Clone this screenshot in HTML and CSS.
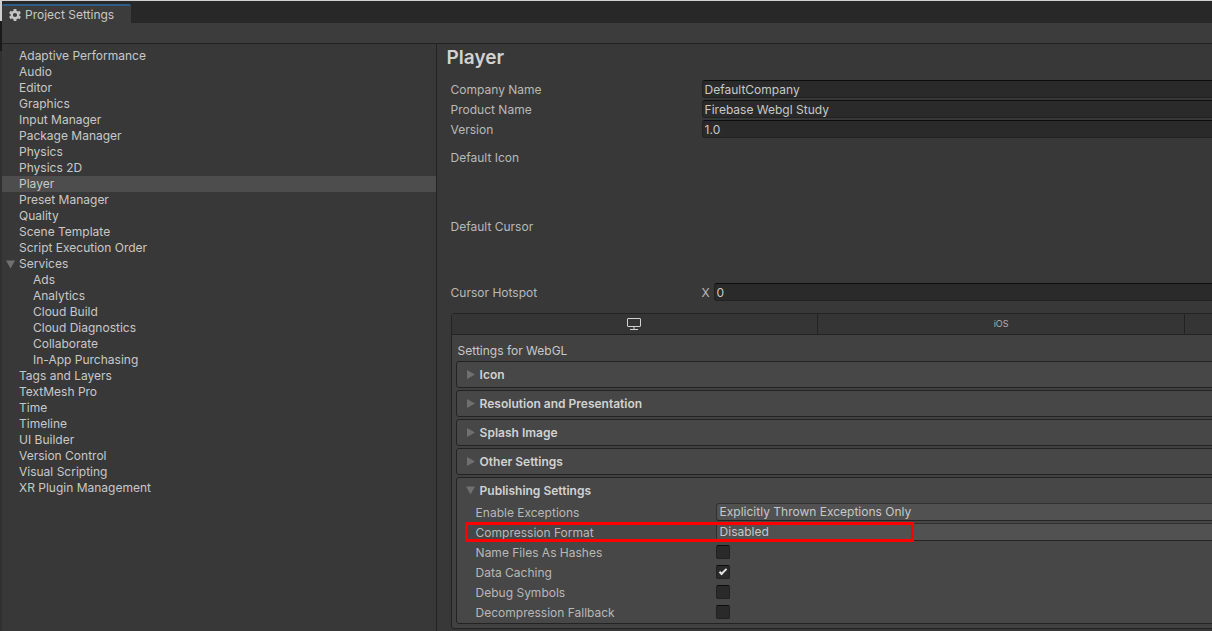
FILE: index.html
```html
<!DOCTYPE html>
<html lang="en">

<head>
    <meta charset="UTF-8">
    <meta name="viewport" content="width=device-width, initial-scale=1.0">
    <title>Project Settings</title>
    <link rel="stylesheet" href="styles.css">
</head>

<body>
    <div class="edge"></div>
    <div class="window">
        <div class="tabBar">
            <button type="button" class="windowTab">
                <svg class="gear" viewBox="-6 -6 12 12">
                    <circle r="3.300" stroke-width="2.400"/>
                    <path stroke-width="2.800" d="M0-6v2M0 4v2M5.200-3l-1.700 1M-5.200-3l1.700 1M5.200 3l-1.700-1M-5.200 3l1.700-1"/>
                </svg>
                Project Settings
            </button>
        </div>
        <div class="toolbar"></div>

        <div class="panes">
            <nav class="sidebar">
                <a href="#">Adaptive Performance</a>
                <a href="#">Audio</a>
                <a href="#">Editor</a>
                <a href="#">Graphics</a>
                <a href="#">Input Manager</a>
                <a href="#">Package Manager</a>
                <a href="#">Physics</a>
                <a href="#">Physics 2D</a>
                <a href="#" class="selected">Player</a>
                <a href="#">Preset Manager</a>
                <a href="#">Quality</a>
                <a href="#">Scene Template</a>
                <a href="#">Script Execution Order</a>
                <a href="#" class="parent"><svg class="arrow" viewBox="0 0 9 8"><path d="M0 0h9L4.500 8z"/></svg>Services</a>
                <a href="#" class="child">Ads</a>
                <a href="#" class="child">Analytics</a>
                <a href="#" class="child">Cloud Build</a>
                <a href="#" class="child">Cloud Diagnostics</a>
                <a href="#" class="child">Collaborate</a>
                <a href="#" class="child">In-App Purchasing</a>
                <a href="#">Tags and Layers</a>
                <a href="#">TextMesh Pro</a>
                <a href="#">Time</a>
                <a href="#">Timeline</a>
                <a href="#">UI Builder</a>
                <a href="#">Version Control</a>
                <a href="#">Visual Scripting</a>
                <a href="#">XR Plugin Management</a>
            </nav>

            <main class="content">
                <h1>Player</h1>
                <form class="playerForm">
                    <div class="row">
                        <label for="companyName">Company Name</label>
                        <input type="text" id="companyName" value="DefaultCompany">
                    </div>
                    <div class="row">
                        <label for="productName">Product Name</label>
                        <input type="text" id="productName" value="Firebase Webgl Study">
                    </div>
                    <div class="row">
                        <label for="version">Version</label>
                        <input type="text" id="version" value="1.0">
                    </div>
                    <div class="pickerRow">Default Icon</div>
                    <div class="pickerRow">Default Cursor</div>
                    <div class="row hotspot">
                        <span class="name">Cursor Hotspot</span>
                        <label for="hotspotX" class="axis">X</label>
                        <input type="text" id="hotspotX" value="0">
                    </div>

                    <div class="platforms">
                        <div class="platformTabs">
                            <button type="button" aria-label="WebGL">
                                <svg class="monitor" viewBox="0 0 14 12">
                                    <rect x="0.500" y="0.500" width="13" height="8" rx="0.500"/>
                                    <path d="M7 9v2M3 11.500h8"/>
                                </svg>
                            </button>
                            <button type="button">iOS</button>
                            <button type="button" aria-label="Android"></button>
                        </div>
                        <div class="platformBody">
                            <p>Settings for WebGL</p>
                            <section>
                                <h2><svg class="arrow" viewBox="0 0 9 9"><path d="M1 0v9l8-4.500z"/></svg>Icon</h2>
                            </section>
                            <section>
                                <h2><svg class="arrow" viewBox="0 0 9 9"><path d="M1 0v9l8-4.500z"/></svg>Resolution and Presentation</h2>
                            </section>
                            <section>
                                <h2><svg class="arrow" viewBox="0 0 9 9"><path d="M1 0v9l8-4.500z"/></svg>Splash Image</h2>
                            </section>
                            <section>
                                <h2><svg class="arrow" viewBox="0 0 9 9"><path d="M1 0v9l8-4.500z"/></svg>Other Settings</h2>
                            </section>
                            <section>
                                <h2><svg class="arrow" viewBox="0 0 9 8"><path d="M0 0h9L4.500 8z"/></svg>Publishing Settings</h2>
                                <div class="options">
                                    <div class="row">
                                        <label for="exceptions">Enable Exceptions</label>
                                        <select id="exceptions">
                                            <option>None</option>
                                            <option selected>Explicitly Thrown Exceptions Only</option>
                                            <option>Full Without Stacktrace</option>
                                            <option>Full With Stacktrace</option>
                                        </select>
                                    </div>
                                    <div class="row">
                                        <label for="compression">Compression Format</label>
                                        <select id="compression">
                                            <option>Brotli</option>
                                            <option>Gzip</option>
                                            <option selected>Disabled</option>
                                        </select>
                                        <div class="highlight"></div>
                                    </div>
                                    <div class="row">
                                        <label for="hashes">Name Files As Hashes</label>
                                        <input type="checkbox" id="hashes">
                                    </div>
                                    <div class="row">
                                        <label for="caching">Data Caching</label>
                                        <input type="checkbox" id="caching" checked>
                                    </div>
                                    <div class="row">
                                        <label for="symbols">Debug Symbols</label>
                                        <input type="checkbox" id="symbols">
                                    </div>
                                    <div class="row">
                                        <label for="fallback">Decompression Fallback</label>
                                        <input type="checkbox" id="fallback">
                                    </div>
                                </div>
                            </section>
                        </div>
                    </div>
                </form>
            </main>
        </div>
    </div>
</body>

</html>
```
FILE: styles.css
```css
* {
    box-sizing: border-box;
}

body {
    margin: 0;
    display: flex;
    min-height: 100vh;
    border-top: 1px solid #d0d0d0;
    background-color: #383838;
    color: #c8c8c8;
    font-family: Inter, "Liberation Sans", sans-serif;
    font-size: 12px;
    line-height: 16px;
    overflow: hidden;
}

button,
input,
select {
    margin: 0;
    font: inherit;
    color: inherit;
}

/* sliver of the window behind */
.edge {
    flex: none;
    width: 2px;
    background: linear-gradient(#d0d0d0 20px, #1a1a1a 20px, #1a1a1a 50px, #303030 50px);
}

.window {
    flex: 1;
    min-width: 0;
    display: flex;
    flex-direction: column;
}

.tabBar {
    display: flex;
    height: 22px;
    padding-top: 3px;
    background-color: #282828;
}

.windowTab {
    display: flex;
    align-items: center;
    gap: 4px;
    padding: 0 17px 0 7px;
    border: none;
    border-top: 2px solid #2c5d87;
    border-radius: 2px 2px 0 0;
    background-color: #3c3c3c;
}

.gear {
    width: 12px;
    height: 12px;
    fill: none;
    stroke: #c4c4c4;
}

.toolbar {
    height: 21px;
    border-bottom: 1px solid #232323;
    background-color: #3c3c3c;
}

.panes {
    flex: 1;
    display: flex;
}

.sidebar {
    flex: none;
    display: flex;
    flex-direction: column;
    width: calc(36% - 1px);
    padding-top: 4px;
    border-right: 1px solid #232323;
}

.sidebar a {
    padding-left: 17px;
    color: inherit;
    text-decoration: none;
}

.sidebar .selected {
    background-color: #4d4d4d;
}

.sidebar .child {
    padding-left: 31px;
}

.sidebar .parent {
    display: flex;
    align-items: center;
    gap: 4px;
    padding-left: 4px;
}

.arrow {
    width: 9px;
    height: 9px;
    fill: #707070;
}

.content {
    flex: 1;
    min-width: 0;
    padding: 0 0 2px 10px;
    overflow: hidden;
}

h1 {
    margin: 0 0 8px;
    font-size: 19px;
    line-height: 28px;
    font-weight: 600;
    color: #d2d2d2;
}

.playerForm {
    min-width: 1106px;
    padding-left: 4px;
}

.row {
    display: flex;
    align-items: center;
    height: 18px;
    margin-bottom: 2px;
}

.row label,
.name {
    flex: none;
    width: 251px;
    padding-top: 2px;
    color: #b8b8b8;
}

.row .axis {
    width: 12px;
}

input[type="text"] {
    flex: 1;
    height: 18px;
    padding: 0 2px;
    border: 1px solid #212121;
    border-top-color: #0d0d0d;
    border-radius: 3px;
    background-color: #2a2a2a;
}

.pickerRow {
    height: 69px;
    padding-top: 10px;
    color: #b8b8b8;
}

.hotspot {
    margin-top: 5px;
}

.platforms {
    margin-top: 12px;
    border: 1px solid #232323;
    border-radius: 3px;
    background-color: #414141;
}

.platformTabs {
    display: grid;
    grid-template-columns: repeat(3, 1fr);
    height: 21px;
    border-bottom: 1px solid #232323;
    background-color: #353535;
}

.platformTabs button {
    display: flex;
    align-items: center;
    justify-content: center;
    padding: 0;
    border: none;
    border-right: 1px solid #232323;
    background: none;
    font-size: 9px;
    color: #b0b0b0;
}

.monitor {
    width: 14px;
    height: 12px;
    fill: none;
    stroke: #d2d2d2;
}

.platformBody {
    padding: 8px 4px 4px;
}

.platformBody p {
    margin: 0 0 2px 2px;
}

section {
    margin-bottom: 2px;
    border: 1px solid #232323;
    border-radius: 3px;
    background-color: #474747;
}

section:last-child {
    margin-bottom: 0;
}

h2 {
    display: flex;
    align-items: center;
    gap: 5px;
    height: 25px;
    margin: 0;
    padding-left: 9px;
    font-size: 12px;
    font-weight: 600;
    color: #d2d2d2;
}

.options {
    padding-left: 19px;
}

.options .row {
    position: relative;
}

.options label {
    width: 240px;
}

select {
    flex: 1;
    height: 18px;
    padding: 0 3px;
    appearance: none;
    border: 1px solid #303030;
    border-bottom-color: #242424;
    border-radius: 3px;
    background-color: #515151;
    line-height: 16px;
}

input[type="checkbox"] {
    display: grid;
    place-items: center;
    width: 14px;
    height: 14px;
    appearance: none;
    border: 1px solid #212121;
    border-top-color: #0d0d0d;
    border-radius: 2px;
    background-color: #2a2a2a;
}

input[type="checkbox"]:checked::before {
    content: "";
    width: 6px;
    height: 2px;
    margin-bottom: 2px;
    border-left: 2px solid #e4e4e4;
    border-bottom: 2px solid #e4e4e4;
    transform: rotate(-45deg);
}

/* red frame round the compression setting */
.highlight {
    position: absolute;
    top: -1px;
    left: -11px;
    width: 449px;
    height: 20px;
    border: 3px solid #ff0000;
    pointer-events: none;
}
```
